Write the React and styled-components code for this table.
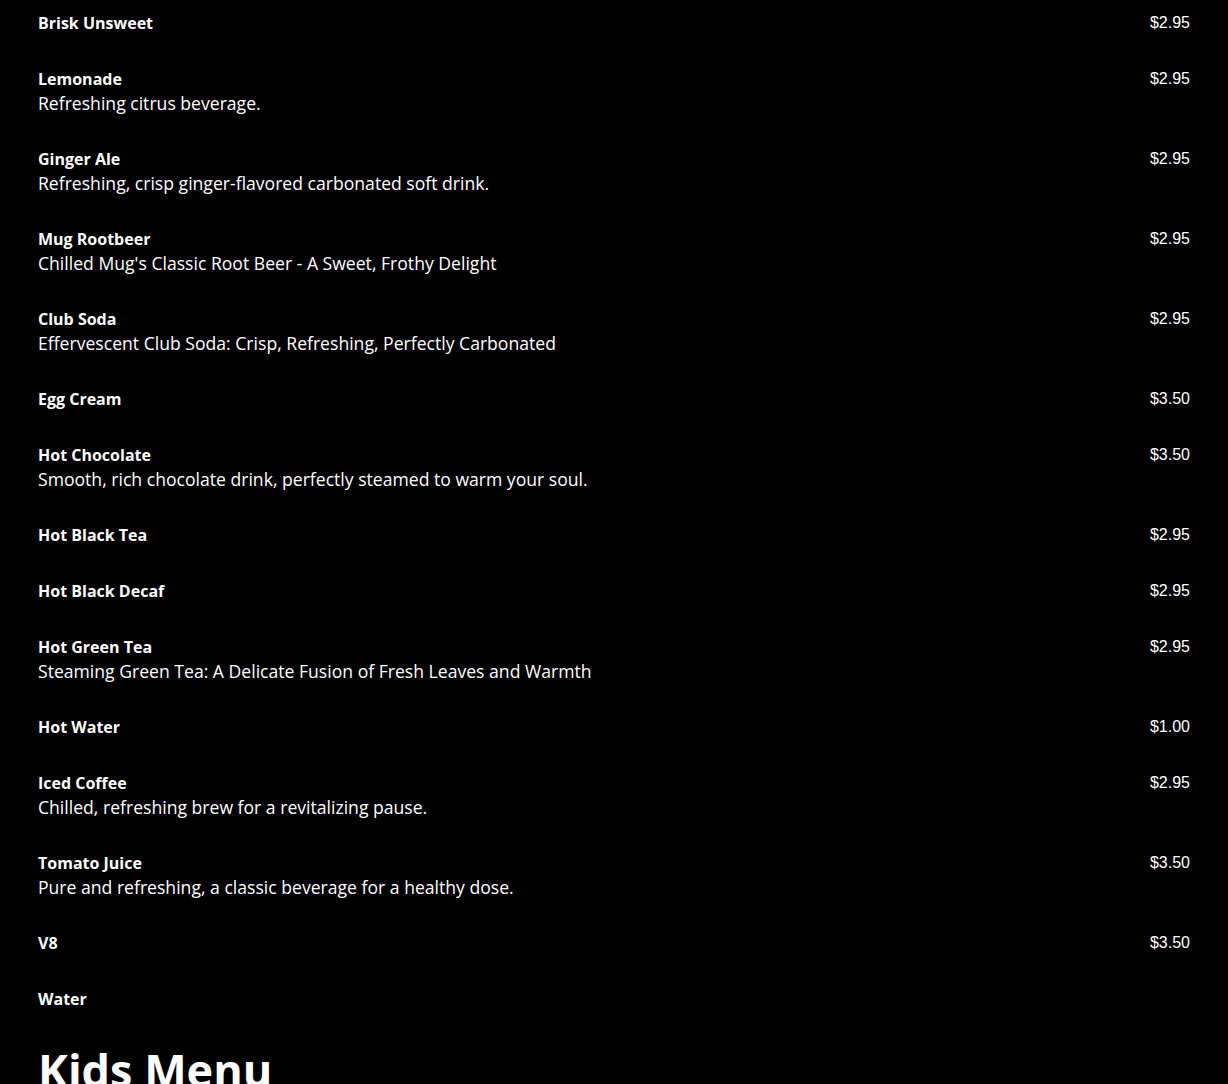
import React from "react";
import styled, { createGlobalStyle } from "styled-components";

const Global = createGlobalStyle`
  html, body { margin: 0; padding: 0; background: #000; }
  body { font-family: "Open Sans", "Noto Sans", sans-serif; color: #fff; }
`;

const Page = styled.main`
  background: #000;
  padding: 11px 38px 0 38px;
  min-height: 1084px;
  box-sizing: border-box;
`;

const List = styled.ul`
  list-style: none;
  margin: 0;
  padding: 0;
  display: flex;
  flex-direction: column;
  gap: 32px;
`;

const Item = styled.li`
  display: flex;
  justify-content: space-between;
  align-items: flex-start;
`;

const Info = styled.div`
  display: flex;
  flex-direction: column;
`;

const Name = styled.span`
  font-size: 16px;
  font-weight: 700;
  line-height: 24px;
`;

const Desc = styled.span`
  font-size: 17.6px;
  font-weight: 400;
  line-height: 24px;
`;

const Price = styled.span`
  font-family: "Liberation Sans", Arial, sans-serif;
  font-size: 16px;
  line-height: 24px;
`;

const Heading = styled.h2`
  margin: 32px 0 0;
  font-size: 45px;
  font-weight: 700;
  line-height: 54px;
`;

const items = [
  ["Brisk Unsweet", "", "$2.95"],
  ["Lemonade", "Refreshing citrus beverage.", "$2.95"],
  ["Ginger Ale", "Refreshing, crisp ginger-flavored carbonated soft drink.", "$2.95"],
  ["Mug Rootbeer", "Chilled Mug's Classic Root Beer - A Sweet, Frothy Delight", "$2.95"],
  ["Club Soda", "Effervescent Club Soda: Crisp, Refreshing, Perfectly Carbonated", "$2.95"],
  ["Egg Cream", "", "$3.50"],
  ["Hot Chocolate", "Smooth, rich chocolate drink, perfectly steamed to warm your soul.", "$3.50"],
  ["Hot Black Tea", "", "$2.95"],
  ["Hot Black Decaf", "", "$2.95"],
  ["Hot Green Tea", "Steaming Green Tea: A Delicate Fusion of Fresh Leaves and Warmth", "$2.95"],
  ["Hot Water", "", "$1.00"],
  ["Iced Coffee", "Chilled, refreshing brew for a revitalizing pause.", "$2.95"],
  ["Tomato Juice", "Pure and refreshing, a classic beverage for a healthy dose.", "$3.50"],
  ["V8", "", "$3.50"],
  ["Water", "", ""],
];

export default function App() {
  return (
    <>
      <Global />
      <Page>
        <List>
          {items.map(([n, d, p]) => (
            <Item key={n}>
              <Info>
                <Name>{n}</Name>
                {d && <Desc>{d}</Desc>}
              </Info>
              {p && <Price>{p}</Price>}
            </Item>
          ))}
        </List>
        <Heading>Kids Menu</Heading>
      </Page>
    </>
  );
}
